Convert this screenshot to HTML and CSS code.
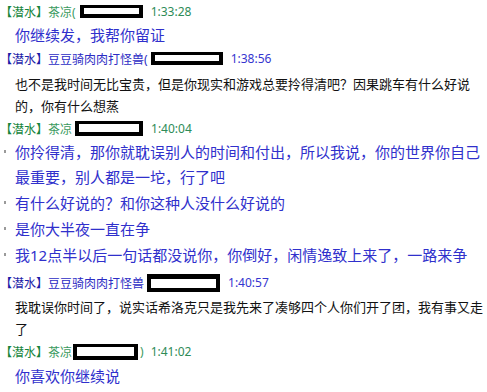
FILE: index.html
```html
<!DOCTYPE html>
<html lang="zh-CN">
<head>
  <meta charset="UTF-8">
  <meta name="viewport" content="width=device-width, initial-scale=1.0">
  <title>聊天记录</title>
  <link rel="stylesheet" href="styles.css">
</head>
<body>
  <div class="chat">
    <div class="head green">
      <span class="tag">【潜水】</span><span class="nick">茶凉(</span>
      <span class="mask mask-1"></span>
      <span class="time">1:33:28</span>
    </div>
    <div class="msg blue">
      <p>你继续发，我帮你留证</p>
    </div>

    <div class="head blue">
      <span class="tag">【潜水】</span><span class="nick">豆豆骑肉肉打怪兽(</span>
      <span class="mask mask-2"></span>
      <span class="time">1:38:56</span>
    </div>
    <div class="msg plain">
      <p>也不是我时间无比宝贵，但是你现实和游戏总要拎得清吧？因果跳车有什么好说的，你有什么想蒸</p>
    </div>

    <div class="head green">
      <span class="tag">【潜水】</span><span class="nick">茶凉</span>
      <span class="mask mask-3"></span>
      <span class="time">1:40:04</span>
    </div>
    <div class="msg blue list">
      <p class="item"><span class="dot"></span><span>你拎得清，那你就耽误别人的时间和付出，所以我说，你的世界你自己最重要，别人都是一坨，行了吧</span></p>
      <p class="item"><span class="dot"></span><span>有什么好说的？和你这种人没什么好说的</span></p>
      <p class="item"><span class="dot"></span><span>是你大半夜一直在争</span></p>
      <p class="item"><span class="dot"></span><span>我12点半以后一句话都没说你，你倒好，闲情逸致上来了，一路来争</span></p>
    </div>

    <div class="head blue">
      <span class="tag">【潜水】</span><span class="nick">豆豆骑肉肉打怪兽</span>
      <span class="mask mask-4"></span>
      <span class="time">1:40:57</span>
    </div>
    <div class="msg plain">
      <p>我耽误你时间了，说实话希洛克只是我先来了凑够四个人你们开了团，我有事又走了</p>
    </div>

    <div class="head green">
      <span class="tag">【潜水】</span><span class="nick">茶凉</span>
      <span class="mask mask-5"></span><span class="nick close">)</span>
      <span class="time">1:41:02</span>
    </div>
    <div class="msg blue last">
      <p>你喜欢你继续说</p>
    </div>
  </div>
</body>
</html>
```

FILE: styles.css
```css
body {
  margin: 0;
  background: #fff;
  font-family: "Noto Sans", "Noto Sans CJK SC", sans-serif;
}
.chat {
  width: 485px;
}
p {
  margin: 0;
}
.head {
  display: flex;
  align-items: center;
  height: 23px;
  font-size: 12px;
  white-space: nowrap;
}
.head.green .tag {
  color: #16853c;
}
.head.green .nick {
  color: #3a9a60;
}
.head.green .time {
  color: #2e8b57;
}
.head.blue .tag {
  color: #1c1ca8;
}
.head.blue .nick {
  color: #2c2cc4;
}
.head.blue .time {
  color: #3535cf;
}
.mask {
  box-sizing: border-box;
  flex: none;
  background: #fff;
  border: 4px solid #000;
  border-top-width: 3px;
}
.mask-1 {
  width: 63px;
  height: 13px;
  margin-left: 4px;
}
.mask-2 {
  width: 72px;
  height: 13px;
  margin-left: 3px;
}
.mask-3 {
  width: 68px;
  height: 15px;
  margin-left: 3px;
}
.mask-4 {
  width: 73px;
  height: 18px;
  margin-left: 3px;
  border-top-width: 5px;
}
.mask-5 {
  width: 65px;
  height: 16px;
  margin-left: 1px;
}
.close {
  margin-left: 2px;
}
.time {
  margin-left: 8px;
}
.mask-5 + .close + .time {
  margin-left: 7px;
}
.msg {
  padding-left: 15px;
}
.msg.blue {
  color: #3030cc;
  font-size: 15px;
  line-height: 24px;
}
.msg.plain {
  color: #111;
  font-size: 13px;
  line-height: 22px;
  padding-top: 3px;
}
.msg.list {
  padding-left: 0;
  padding-bottom: 2px;
  line-height: 25px;
}
.item {
  display: grid;
  grid-template-columns: 15px 1fr;
  margin-bottom: 1px;
}
.dot {
  width: 2px;
  height: 3px;
  margin: 10px 0 0 4px;
  background: #9a9a9a;
}
.msg.list + .head + .msg.plain {
  padding-top: 2px;
}
.msg.last {
  padding-top: 1px;
}
```
